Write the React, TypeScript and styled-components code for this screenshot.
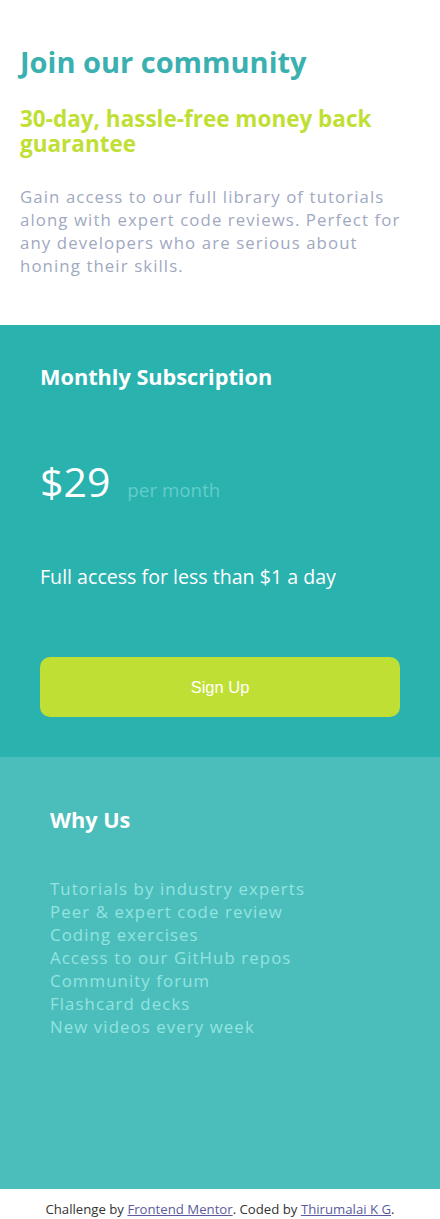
import React from "react";
import styled, { createGlobalStyle } from "styled-components";

const GlobalStyle = createGlobalStyle`
  * { box-sizing: border-box; }
  body {
    margin: 0;
    background: #ffffff;
    font-family: "Open Sans", "Noto Sans", sans-serif;
  }
`;

const Page = styled.main`
  width: 440px;
  display: flex;
  flex-direction: column;
`;

const Intro = styled.section`
  background: #ffffff;
  padding: 44px 20px 48px;
  display: flex;
  flex-direction: column;
`;

const Title = styled.h1`
  margin: 0;
  font-size: 29px;
  line-height: 36px;
  font-weight: 700;
  color: #3ab0b0;
`;

const Guarantee = styled.h2`
  margin: 26px 0 0;
  font-size: 22.5px;
  line-height: 25px;
  font-weight: 700;
  color: #c0df34;
`;

const Lead = styled.p`
  margin: 29px 0 0;
  font-size: 16.8px;
  letter-spacing: 1.1px;
  line-height: 23px;
  color: #9fa9bf;
`;

const Subscription = styled.section`
  background: #2ab2af;
  padding: 40px;
  display: flex;
  flex-direction: column;
`;

const CardTitle = styled.h3`
  margin: 0;
  font-size: 21.7px;
  line-height: 24px;
  font-weight: 700;
  color: #ffffff;
`;

const PriceRow = styled.div`
  margin-top: 68px;
  display: flex;
  align-items: baseline;
  gap: 17px;
`;

const Price = styled.span`
  font-size: 41px;
  line-height: 48px;
  color: #ffffff;
`;

const Period = styled.span`
  font-size: 18.8px;
  line-height: 24px;
  color: #62cdca;
`;

const Access = styled.p`
  margin: 60px 0 0;
  font-size: 19.6px;
  line-height: 24px;
  color: #ffffff;
`;

const SignUp = styled.button`
  margin-top: 68px;
  height: 60px;
  width: 100%;
  border: none;
  border-radius: 10px;
  background: #c0df34;
  color: #ffffff;
  font-family: "Liberation Sans", Arial, sans-serif;
  font-size: 16.5px;
  cursor: pointer;
`;

const WhyUs = styled.section`
  background: #4bbebc;
  height: 432px;
  padding: 51px 50px 0;
  display: flex;
  flex-direction: column;
`;

const Benefits = styled.ul`
  margin: 45px 0 0;
  padding: 0;
  list-style: none;
  font-size: 16.8px;
  letter-spacing: 1.1px;
  line-height: 23px;
  color: #94e4e0;
`;

const Footer = styled.footer`
  background: #ffffff;
  height: 30px;
  padding-top: 13px;
  text-align: center;
  font-size: 13.2px;
  line-height: 15px;
  color: #333333;
`;

const Link = styled.a`
  color: #5b5a9e;
  text-decoration: underline;
`;

const benefits = [
  "Tutorials by industry experts",
  "Peer & expert code review",
  "Coding exercises",
  "Access to our GitHub repos",
  "Community forum",
  "Flashcard decks",
  "New videos every week",
];

export default function App() {
  return (
    <>
      <GlobalStyle />
      <Page>
        <Intro>
          <Title>Join our community</Title>
          <Guarantee>30-day, hassle-free money back guarantee</Guarantee>
          <Lead>
            Gain access to our full library of tutorials along with expert code
            reviews. Perfect for any developers who are serious about honing
            their skills.
          </Lead>
        </Intro>
        <Subscription>
          <CardTitle>Monthly Subscription</CardTitle>
          <PriceRow>
            <Price>$29</Price>
            <Period>per month</Period>
          </PriceRow>
          <Access>Full access for less than $1 a day</Access>
          <SignUp>Sign Up</SignUp>
        </Subscription>
        <WhyUs>
          <CardTitle>Why Us</CardTitle>
          <Benefits>
            {benefits.map((b) => (
              <li key={b}>{b}</li>
            ))}
          </Benefits>
        </WhyUs>
        <Footer>
          Challenge by <Link href="#">Frontend Mentor</Link>. Coded by{" "}
          <Link href="#">Thirumalai K G</Link>.
        </Footer>
      </Page>
    </>
  );
}
